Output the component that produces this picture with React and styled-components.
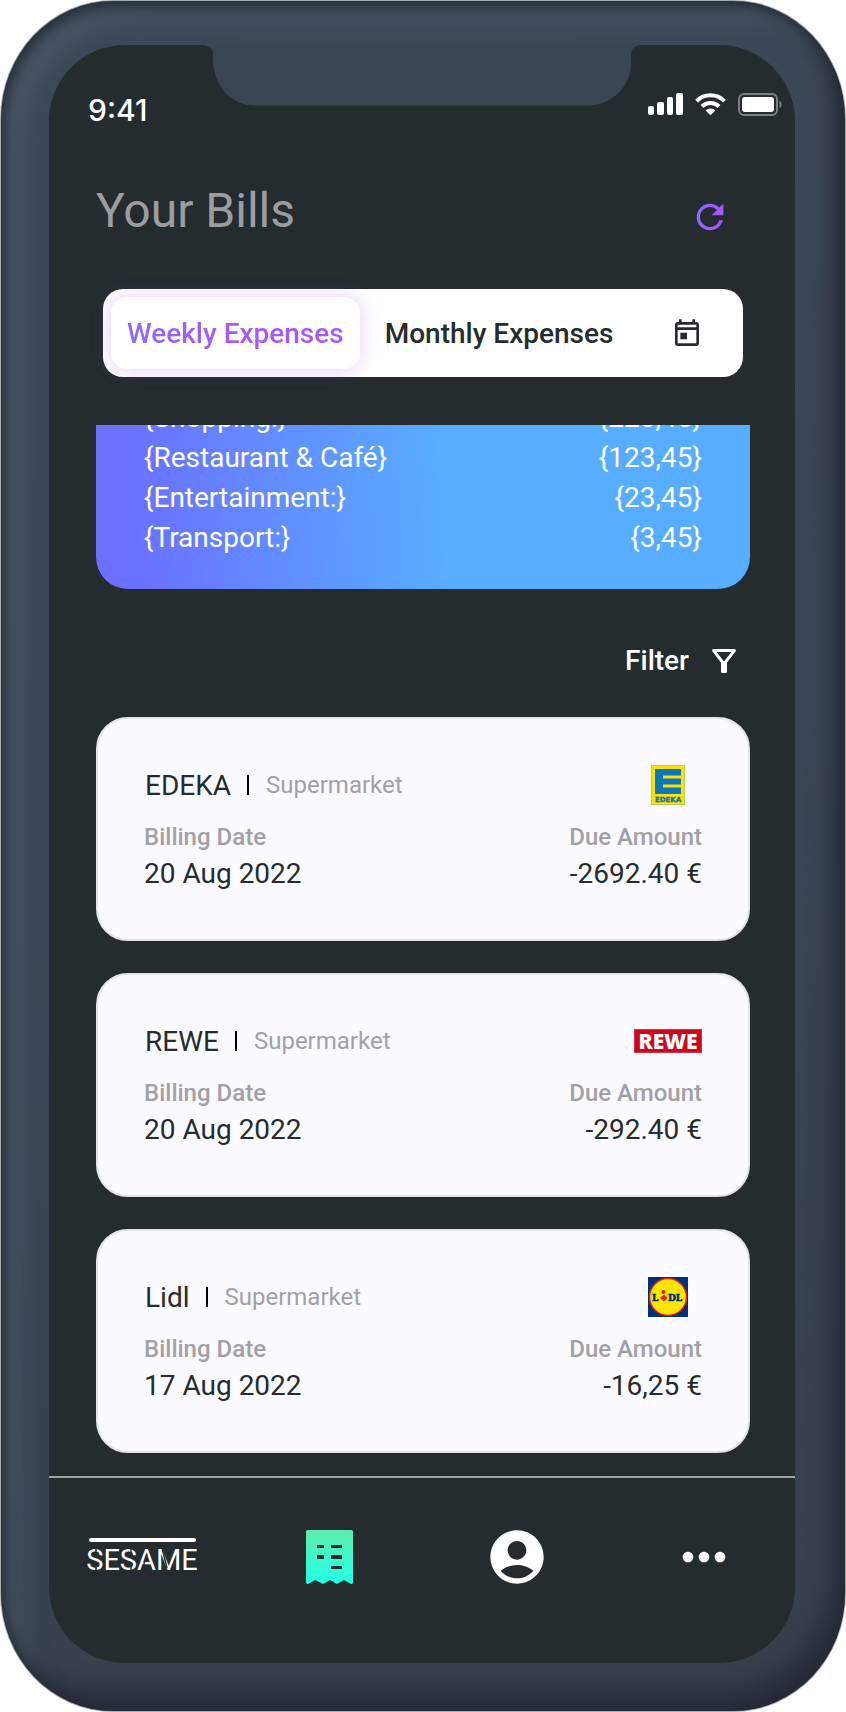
import React from "react";
import styled, { createGlobalStyle } from "styled-components";
import { MdAccountCircle, MdMoreHoriz } from "react-icons/md";

const ink = "#242c2f";
const muted = "#a1a1a5";

const GlobalStyle = createGlobalStyle`
  *, *::before, *::after { box-sizing: border-box; }
  body {
    margin: 0;
    background: #fff;
    font-family: Roboto, "Liberation Sans", sans-serif;
  }
  button { border: 0; padding: 0; background: none; font: inherit; color: inherit; cursor: pointer; }
  a { color: inherit; text-decoration: none; }
  h1, h2, ul, dl, dt, dd { margin: 0; padding: 0; font-weight: 400; }
  ul { list-style: none; }
  svg { display: block; }
`;

const Phone = styled.div`
  margin: 1px;
  padding: 44px 50px 48px 48px;
  border-radius: 112px / 118px;
  background: linear-gradient(165deg, #3d4856 0%, #3a4653 50%, #36404c 100%);
  box-shadow:
    0 0 0 1px rgba(40, 52, 60, 0.4),
    inset 3px 6px 14px rgba(28, 38, 46, 0.85),
    inset -16px -24px 24px -4px #272c38,
    inset 26px 24px 22px -4px rgba(96, 116, 130, 0.32);
`;

const Screen = styled.main`
  position: relative;
  display: flex;
  flex-direction: column;
  overflow: hidden;
  border-radius: 76px;
  background: ${ink};
  color: #fff;
`;

const Notch = styled.svg`
  position: absolute;
  top: 0;
  left: 50%;
  transform: translateX(-50%);
`;

const StatusBar = styled.div`
  display: flex;
  justify-content: space-between;
  align-items: flex-start;
  padding: 48px 12px 0 39px;
`;

const Time = styled.time`
  font: 500 30px/34px Inter, "Liberation Sans", sans-serif;
`;

const Header = styled.header`
  display: flex;
  justify-content: space-between;
  align-items: flex-end;
  margin-top: 58px;
  padding: 0 65px 0 47px;
`;

const Title = styled.h1`
  font-size: 48px;
  line-height: 52px;
  color: #9d9da1;
`;

const Tabs = styled.div`
  display: flex;
  align-items: center;
  margin: 52px 52px 0 54px;
  padding: 8px;
  border-radius: 20px;
  background: #fff;
  color: ${ink};
`;

const Tab = styled.button`
  height: 72px;
  padding: 0 16px;
  border-radius: 16px;
  font-size: 28px;
  font-weight: 500;
  white-space: nowrap;
  ${({ $active }) => $active && "box-shadow: 0 0 20px rgba(150, 90, 240, 0.3);"}
`;

const TabLabel = styled.span`
  ${({ $active }) =>
    $active &&
    `
    background: linear-gradient(90deg, #8b6bff 0%, #a657ff 50%);
    background-clip: text;
    color: transparent;
  `}
`;

const TabGap = styled.span`
  width: 9px;
`;

const CalendarButton = styled.button`
  margin-left: auto;
  padding: 2px 32px 0;
`;

const Content = styled.div`
  margin: 48px 45px 0 47px;
`;

const Summary = styled.section`
  display: flex;
  flex-direction: column;
  justify-content: flex-end;
  height: 164px;
  overflow: hidden;
  padding: 0 48px 31px;
  border-radius: 0 0 32px 32px;
  background: linear-gradient(86deg, #6b70ff 6%, #57adff 53%);
`;

const SummaryRow = styled.div`
  display: flex;
  flex: none;
  justify-content: space-between;
  font-size: 28px;
  line-height: 40px;
`;

const FilterButton = styled.button`
  display: flex;
  align-items: center;
  gap: 17px;
  margin: 54px 8px 38px auto;
  font-size: 28px;
  font-weight: 500;
  line-height: 36px;
`;

const BillList = styled.ul`
  display: flex;
  flex-direction: column;
  gap: 32px;
`;

const Bill = styled.li`
  padding: 46px 46px 44px;
  border: 2px solid #e3e3e5;
  border-radius: 32px;
  background: #fbfaff;
  color: ${ink};
`;

const BillHead = styled.div`
  display: flex;
  align-items: center;
  height: 40px;
  margin-bottom: 16px;
  padding-left: 1px;
`;

const Merchant = styled.h2`
  font-size: 28px;
`;

const Divider = styled.span`
  width: 2px;
  height: 20px;
  margin: 0 17px 0 16px;
  background: #000;
`;

const Category = styled.span`
  font-size: 24px;
  color: ${muted};
`;

const LogoSlot = styled.div`
  display: flex;
  justify-content: center;
  width: 68px;
  margin-left: auto;
`;

const Details = styled.dl`
  display: flex;
  justify-content: space-between;
`;

const Detail = styled.div`
  text-align: ${({ $end }) => ($end ? "right" : "left")};
`;

const DetailLabel = styled.dt`
  font-size: 24px;
  font-weight: 500;
  line-height: 32px;
  color: ${muted};
`;

const DetailValue = styled.dd`
  font-size: 28px;
  line-height: 42px;
`;

const NavBar = styled.nav`
  display: grid;
  grid-template-columns: repeat(4, 1fr);
  column-gap: 6px;
  margin-top: 23px;
  padding: 47px 0 74px 2px;
  border-top: 2px solid #9d9fa1;
`;

const NavLink = styled.a`
  display: flex;
  align-items: center;
  justify-content: center;
  height: 64px;
`;

const SignalIcon = () => (
  <svg width="35" height="22" viewBox="0 0 35 22" fill="#fff" aria-hidden="true">
    <rect x="0" y="13" width="6" height="9" rx="2" />
    <rect x="9" y="9" width="7" height="13" rx="2" />
    <rect x="19" y="4" width="6" height="18" rx="2" />
    <rect x="28" y="0" width="7" height="22" rx="2" />
  </svg>
);

const WifiIcon = () => (
  <svg width="31" height="23" viewBox="0 0 31 23" aria-hidden="true">
    <g fill="none" stroke="#fff" strokeWidth="4">
      <path d="M1.6 8.1C9.2 .3 21.8 .3 29.4 8.1" />
      <path d="M7 13.5c4.7-4.8 12.3-4.8 17 0" />
    </g>
    <path d="M15.5 22.3 10.6 17.4c2.7-2.7 7.1-2.7 9.8 0z" fill="#fff" />
  </svg>
);

const BatteryIcon = () => (
  <svg width="45" height="23" viewBox="0 0 45 23" aria-hidden="true">
    <rect x="1" y="1" width="38" height="21" rx="5" fill="none" stroke="#7b8082" strokeWidth="2" />
    <rect x="4" y="4" width="32" height="15" rx="3" fill="#fff" />
    <path d="M41.5 7.5c2.7 1.5 2.7 6.5 0 8z" fill="#7b8082" />
  </svg>
);

const StatusIcons = styled.div`
  display: flex;
  gap: 12px;
`;

const RefreshIcon = () => (
  <svg width="40" height="40" viewBox="0 0 24 24" aria-hidden="true">
    <defs>
      <linearGradient id="refresh" x1="0" x2="1">
        <stop offset="0" stopColor="#8b6bff" />
        <stop offset="0.6" stopColor="#a657ff" />
      </linearGradient>
    </defs>
    <path
      fill="url(#refresh)"
      d="M17.65 6.35A7.958 7.958 0 0 0 12 4c-4.42 0-7.99 3.58-7.99 8s3.57 8 7.99 8c3.73 0 6.84-2.55 7.73-6h-2.08A5.99 5.99 0 0 1 12 18c-3.31 0-6-2.69-6-6s2.69-6 6-6c1.66 0 3.14.69 4.22 1.78L13 11h7V4l-2.35 2.35z"
    />
  </svg>
);

const CalendarIcon = () => (
  <svg width="32" height="32" viewBox="0 0 24 24" fill={ink} aria-hidden="true">
    <path d="M19 3h-1V1h-2v2H8V1H6v2H5c-1.11 0-1.99.9-1.99 2L3 19a2 2 0 0 0 2 2h14c1.1 0 2-.9 2-2V5c0-1.1-.9-2-2-2zm0 16H5V9h14v10zm0-12H5V5h14v2zM7 11h5v5H7z" />
  </svg>
);

const FilterIcon = () => (
  <svg width="36" height="36" viewBox="0 0 24 24" fill="#fff" aria-hidden="true">
    <path d="M7 6h10l-5.01 6.3L7 6zm-2.75-.39C6.27 8.2 10 13 10 13v6c0 .55.45 1 1 1h2c.55 0 1-.45 1-1v-6s3.72-4.8 5.74-7.39A.998.998 0 0 0 18.95 4H5.04c-.83 0-1.3.95-.79 1.61z" />
  </svg>
);

const EdekaLogo = () => (
  <svg width="34" height="40" viewBox="0 0 34 40" role="img" aria-label="EDEKA logo">
    <rect width="34" height="40" fill="#b9cf4e" />
    <rect x="1" y="1" width="32" height="38" fill="#ffe000" />
    <rect x="4" y="4" width="26" height="25" fill="#0a78bd" />
    <rect x="12" y="10.5" width="18" height="3" fill="#ffe000" />
    <rect x="12" y="19.5" width="18" height="3" fill="#ffe000" />
    <text x="17" y="36.5" textAnchor="middle" fontFamily="DejaVu Sans, sans-serif" fontWeight="700" fontSize="7" fill="#0a78bd" stroke="#0a78bd" strokeWidth="0.4">
      EDEKA
    </text>
  </svg>
);

const ReweLogo = () => (
  <svg width="68" height="24" viewBox="0 0 68 24" role="img" aria-label="REWE logo">
    <rect width="68" height="24" fill="#d6304a" />
    <rect x="1" y="1" width="66" height="22" fill="#cc071e" />
    <text x="34" y="20" textAnchor="middle" fontFamily="Open Sans, sans-serif" fontWeight="800" fontSize="21" fill="#fff">
      REWE
    </text>
  </svg>
);

const LidlLogo = () => (
  <svg width="40" height="40" viewBox="0 0 40 40" role="img" aria-label="Lidl logo">
    <rect width="40" height="40" fill="#00307c" />
    <circle cx="20" cy="20" r="18.5" fill="#ffe600" stroke="#e3231b" strokeWidth="1.5" />
    <g fontFamily="DejaVu Serif, serif" fontWeight="700" fontSize="9" fill="#00307c" stroke="#00307c" strokeWidth="0.6">
      <text x="4" y="23.5">L</text>
      <text x="20" y="23.5">DL</text>
    </g>
    <circle cx="15.5" cy="15" r="2" fill="#e3231b" />
    <path d="M12 21l4-3.5 3.5 3.5-3.5 3.5z" fill="#e3231b" />
  </svg>
);

const SesameLogo = () => (
  <svg width="112" height="38" viewBox="0 0 112 38" role="img" aria-label="Sesame">
    <rect x="3" y="0" width="107" height="4" rx="2" fill="#fff" />
    <text x="56" y="32" textAnchor="middle" fontFamily="Roboto, sans-serif" fontSize="29" fill="#fff">
      SESAME
    </text>
    <path d="M10 9v6M10 28v6M45 9v6M45 28v6M57 29l4-13M76 10l5 20" stroke={ink} strokeWidth="1.5" />
  </svg>
);

const ReceiptIcon = () => (
  <svg width="47" height="54" viewBox="0 0 47 54" aria-hidden="true">
    <defs>
      <linearGradient id="receipt" x1="0" y1="0" x2="0" y2="1">
        <stop offset="0" stopColor="#5cedb0" />
        <stop offset="1" stopColor="#22ffe6" />
      </linearGradient>
    </defs>
    <path
      fill="url(#receipt)"
      d="M1.5 0h44a1.5 1.5 0 0 1 1.5 1.5v51a1.5 1.5 0 0 1-2.3 1.2L38 50l-7 4-7-4-7 4-7.5-4-7.2 3.7A1.5 1.5 0 0 1 0 52.500v-51A1.5 1.5 0 0 1 1.5 0z"
    />
    <path fill={ink} d="M11 15h7v3h-7zM25 15h11v3H25zM11 25h7v4h-7zM25 25h11v4H25zM25 36h11v3H25z" />
  </svg>
);

const summary = [
  ["{Shopping:}", "{223,45}"],
  ["{Restaurant & Café}", "{123,45}"],
  ["{Entertainment:}", "{23,45}"],
  ["{Transport:}", "{3,45}"],
];

const bills = [
  { name: "EDEKA", date: "20 Aug 2022", amount: "-2692.40 €", Logo: EdekaLogo },
  { name: "REWE", date: "20 Aug 2022", amount: "-292.40 €", Logo: ReweLogo },
  { name: "Lidl", date: "17 Aug 2022", amount: "-16,25 €", Logo: LidlLogo },
];

export default function App() {
  return (
    <>
      <GlobalStyle />
      <Phone>
        <Screen>
          <Notch width="438" height="61" viewBox="0 0 438 61" aria-hidden="true">
            <path fill="#3a4552" d="M0 0C7 1 10 4 10 10v6c1 26 19 44.500 42 44.500h333c23 0 43-18.500 43-42.500v-8c0-6 3-9 10-10z" />
          </Notch>
          <StatusBar>
            <Time>9:41</Time>
            <StatusIcons>
              <SignalIcon />
              <WifiIcon />
              <BatteryIcon />
            </StatusIcons>
          </StatusBar>
          <Header>
            <Title>Your Bills</Title>
            <button type="button" aria-label="Refresh">
              <RefreshIcon />
            </button>
          </Header>
          <Tabs>
            <Tab type="button" $active aria-pressed="true">
              <TabLabel $active>Weekly Expenses</TabLabel>
            </Tab>
            <TabGap />
            <Tab type="button" aria-pressed="false">
              <TabLabel>Monthly Expenses</TabLabel>
            </Tab>
            <CalendarButton type="button" aria-label="Choose dates">
              <CalendarIcon />
            </CalendarButton>
          </Tabs>
          <Content>
            <Summary>
              {summary.map(([label, value]) => (
                <SummaryRow key={label}>
                  <span>{label}</span>
                  <span>{value}</span>
                </SummaryRow>
              ))}
            </Summary>
            <FilterButton type="button">
              Filter
              <FilterIcon />
            </FilterButton>
            <BillList>
              {bills.map(({ name, date, amount, Logo }) => (
                <Bill key={name}>
                  <BillHead>
                    <Merchant>{name}</Merchant>
                    <Divider />
                    <Category>Supermarket</Category>
                    <LogoSlot>
                      <Logo />
                    </LogoSlot>
                  </BillHead>
                  <Details>
                    <Detail>
                      <DetailLabel>Billing Date</DetailLabel>
                      <DetailValue>{date}</DetailValue>
                    </Detail>
                    <Detail $end>
                      <DetailLabel>Due Amount</DetailLabel>
                      <DetailValue>{amount}</DetailValue>
                    </Detail>
                  </Details>
                </Bill>
              ))}
            </BillList>
          </Content>
          <NavBar>
            <NavLink href="#home">
              <SesameLogo />
            </NavLink>
            <NavLink href="#bills" aria-label="Bills" aria-current="page">
              <ReceiptIcon />
            </NavLink>
            <NavLink href="#account" aria-label="Account">
              <MdAccountCircle size={64} />
            </NavLink>
            <NavLink href="#more" aria-label="More">
              <MdMoreHoriz size={64} />
            </NavLink>
          </NavBar>
        </Screen>
      </Phone>
    </>
  );
}
